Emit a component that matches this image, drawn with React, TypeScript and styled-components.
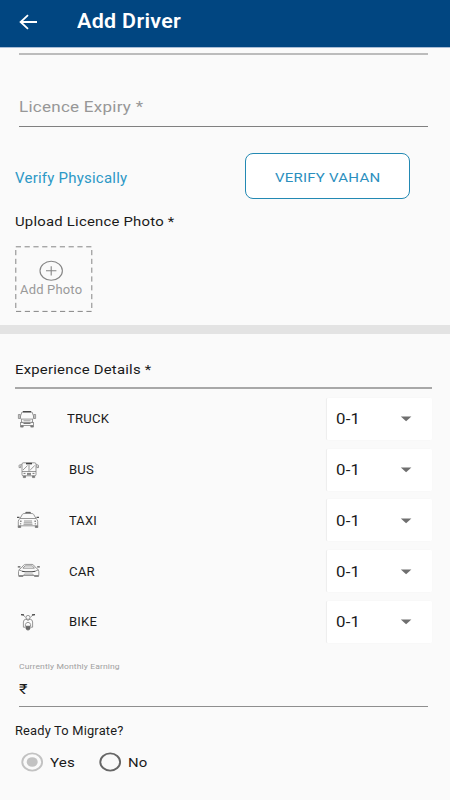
import React from "react";
import styled, { createGlobalStyle } from "styled-components";

const GlobalStyle = createGlobalStyle`
  * { box-sizing: border-box; }
  body { margin: 0; background: #fafafa; font-family: Roboto, "Noto Sans", sans-serif; }
`;

const Screen = styled.div`
  width: 450px;
  height: 800px;
  overflow: hidden;
  background: #fafafa;
  display: flex;
  flex-direction: column;
`;

const Text = styled.span<{ $size: number; $stretch: number; $color?: string; $weight?: number }>`
  display: block;
  white-space: nowrap;
  font-size: ${(p) => p.$size}px;
  font-weight: ${(p) => p.$weight ?? 400};
  letter-spacing: 0.015em;
  color: ${(p) => p.$color ?? "#1a1a1a"};
  transform: scaleX(${(p) => p.$stretch});
  transform-origin: left center;
`;

const AppBar = styled.header`
  flex: none;
  height: 48px;
  padding: 0 0 4px 19px;
  display: flex;
  align-items: center;
  gap: 39px;
  background: #014681;
  border-bottom: 1px solid #a9bdd6;
`;

const Title = styled.h1`
  margin: 0;
  padding-top: 1px;
  line-height: 22px;
`;

const Content = styled.main`
  display: flex;
  flex-direction: column;
`;

const PreviousField = styled.div`
  height: 7px;
  margin: 0 22px 0 19px;
  border-bottom: 2px solid #bcbcbc;
`;

const ExpiryField = styled.div`
  height: 72px;
  margin: 0 22px 0 19px;
  padding-top: 43.3px;
  border-bottom: 1px solid #808080;
  line-height: 18px;
`;

const VerifyRow = styled.div`
  height: 46px;
  margin: 26px 40px 0 14.7px;
  display: flex;
  align-items: center;
  justify-content: space-between;
`;

const VerifyButton = styled.button`
  width: 165px;
  height: 46px;
  padding: 1px 0 0 28.7px;
  display: flex;
  align-items: center;
  background: #fff;
  border: 1px solid #2389b3;
  border-radius: 8px;
  font-family: inherit;
`;

const VerifyLink = styled.a`
  padding-top: 4px;
`;

const UploadSection = styled.section`
  height: 126px;
  padding: 13px 0 0 14.8px;
  line-height: 20px;
`;

const PhotoBox = styled.div`
  width: 78px;
  height: 66px;
  margin: 14px 0 0;
  position: relative;
  display: flex;
  flex-direction: column;
  padding: 14px 0 0 5.2px;
`;

const DashedFrame = styled.svg`
  position: absolute;
  left: 0;
  top: 0;
`;

const PlusIcon = styled.svg`
  display: block;
  margin-left: 19px;
`;

const PhotoLabel = styled.div`
  padding-top: 1px;
  line-height: 16px;
`;

const Divider = styled.div`
  height: 9px;
  background: #e3e3e3;
`;

const ExperienceTitle = styled.h2`
  height: 55px;
  margin: 0 18px 0 14.6px;
  padding-top: 26px;
  border-bottom: 2px solid #a8a8a8;
  line-height: 20px;
`;

const ExperienceList = styled.div`
  padding-top: 4.4px;
  height: 259px;
`;

const ExperienceRow = styled.div`
  height: 50.8px;
  padding: 0 18px 0 14px;
  display: grid;
  grid-template-columns: 53px 1fr 105px;
  align-items: center;
`;

const VehicleName = styled.div<{ $indent: number }>`
  padding: 1px 0 0 ${(p) => p.$indent}px;
  line-height: 16px;
`;

const Select = styled.div`
  height: 42px;
  padding: 1px 20px 0 9px;
  display: flex;
  align-items: center;
  justify-content: space-between;
  background: #fff;
  border-radius: 1px;
  box-shadow: -1px 0 1px rgba(0, 0, 0, 0.05), 0 0 1px rgba(0, 0, 0, 0.04);
`;

const EarningField = styled.div`
  height: 59px;
  margin: 0 22px 0 18.8px;
  padding-top: 12px;
  border-bottom: 1px solid #8e8e8e;
`;

const EarningLabel = styled.div`
  padding-top: 1px;
  line-height: 12px;
`;

const EarningValue = styled.div`
  padding-top: 5.5px;
  line-height: 20px;
`;

const Question = styled.div`
  padding: 14px 0 0 14.8px;
  line-height: 20px;
`;

const RadioGroup = styled.div`
  padding: 11px 0 0 21px;
  display: flex;
  gap: 24px;
`;

const RadioOption = styled.label`
  width: 54px;
  height: 20px;
  display: flex;
  align-items: center;
  gap: 5.8px;
`;

const Icon = styled.svg`
  flex: none;
  display: block;
`;

const vehicleSvg = {
  width: 28,
  height: 24,
  viewBox: "0 0 28 24",
  fill: "none",
  stroke: "#777",
  strokeWidth: 0.75,
} as const;

const Truck = () => (
  <Icon {...vehicleSvg}>
    <path d="M8 5h10l1.5 4v2.2q0 .9-.9.9H7.4q-.9 0-.9-.9V9z" />
    <path d="M9 4.7h8" stroke="#444" strokeWidth="1.3" />
    <path d="M6.5 7.5H4.4v4h1.5V8M19.5 7.5h2.1v4h-1.5V8" />
    <path d="M7.5 12.2v3.4h11v-3.4M6.5 15v3.5h13V15M9.5 13.8h7" />
    <path d="M9.5 16.4h7M7.2 15.3h1.4M17.4 15.3h1.4" stroke="#777" strokeWidth="1.1" />
    <path d="M6.6 18.5v1.6h2.6v-1.6M16.8 18.5v1.6h2.6v-1.6" fill="#777" />
  </Icon>
);

const Bus = () => (
  <Icon {...vehicleSvg}>
    <rect x="8" y="4.8" width="14" height="13" rx="1.3" />
    <path d="M12 5.6h6" stroke="#444" strokeWidth="1.5" />
    <path d="M8 6.8H6q-.9 0-.9.8v2h1.6V7.5M22 6.8h1.6q.9 0 .9.8v2h-1.6V7.5M8 13.5h14M15 6.8v6.7M9 12l4.5-4.4M16.2 12l4.5-4.4" />
    <path d="M9.5 15.4h2M13 15.4h4M18.5 15.4h2M13 16.7h4" strokeWidth="1" />
    <path d="M9.3 17.8v1.8h2.2v-1.8M18.5 17.8v1.8h2.2v-1.8" fill="#777" />
  </Icon>
);

const Taxi = () => (
  <Icon {...vehicleSvg}>
    <path d="M11.8 5.2V4.3h4.6v.9" fill="#555" stroke="#555" />
    <path d="M6 10.5l2.3-4q.4-.8 1.3-.9 4.4-.4 8.8 0 .9.1 1.3.9l2.3 4M6 10.5h16M6 10.5q-1.7 1-1.7 3v4.3h19.4v-4.3q0-2-1.7-3" />
    <path d="M3 9.4h2.5M22.5 9.4H25" stroke="#555" strokeWidth="1.3" />
    <path d="M10 13h8M9.8 14.8h8.4M9.5 16.3h9" />
    <path d="M6 13.2h1.6M20.4 13.2H22M6.2 15.8h1M20.8 15.8h1" stroke="#555" strokeWidth="1" />
    <path d="M4.2 17.8v1.7h2.5v-1.7M21.3 17.8v1.7h2.5v-1.7" fill="#777" />
  </Icon>
);

const Car = () => (
  <Icon {...vehicleSvg}>
    <path d="M7 9.2l2.7-3Q10.5 5.4 11.5 5.4h6.5q1 0 1.6.7l2.7 3.1M9 9.2l2-2.3h7.4l2 2.3zM7 9.2q-2.5 1-2.5 3.4v3.9h20.3v-3.9q0-2.4-2.5-3.4" />
    <path d="M3.8 7.8h2.6M23.2 7.8h2.6" stroke="#555" strokeWidth="1.2" />
    <path d="M8 12.2q6.7 1.2 13.4 0" stroke="#444" strokeWidth="1.1" />
    <path d="M5 10.9l3 1.2M24.3 10.9l-3 1.2M9.5 16.3l1-1.2h8.2l1 1.2" />
    <path d="M4.6 17.2h4.6M20.2 17.2h4.6" stroke="#666" strokeWidth="1.1" />
  </Icon>
);

const Bike = () => (
  <Icon {...vehicleSvg}>
    <path d="M7 4.7l3 .3M18 5l3-.3" stroke="#444" strokeWidth="1.3" />
    <path d="M9.2 5l2.4 2.3M18.8 5l-2.4 2.3" />
    <circle cx="14" cy="7.4" r="2" />
    <path d="M12 9q-2.6.6-2.6 3v5.2h2M16 9q2.6.6 2.6 3v5.2h-2M12 9.2l2 1.2 2-1.2M11.4 16.2V14.5q.4-2 2.6-2.2 2.2.2 2.6 2.2v1.7z" />
    <path d="M12 16.5h4v1.8q-.2 1.8-2 1.8t-2-1.8z" fill="#666" stroke="#666" />
  </Icon>
);

const vehicles = [
  { name: "TRUCK", icon: Truck, indent: 0.4, stretch: 1.1 },
  { name: "BUS", icon: Bus, indent: 2.2, stretch: 1.1 },
  { name: "TAXI", icon: Taxi, indent: 2.4, stretch: 1.08 },
  { name: "CAR", icon: Car, indent: 2.4, stretch: 1.11 },
  { name: "BIKE", icon: Bike, indent: 2, stretch: 1.1 },
];

const Radio = ({ checked }: { checked?: boolean }) => (
  <Icon width="23" height="20" viewBox="0 0 23 20" fill="none">
    <ellipse cx="11.2" cy="10" rx="9.9" ry="8.6" stroke={checked ? "#c2c2c2" : "#666"} strokeWidth="1.9" />
    {checked && <ellipse cx="11.2" cy="10" rx="5.5" ry="4.8" fill="#c2c2c2" />}
  </Icon>
);

export default function App() {
  return (
    <Screen>
      <GlobalStyle />
      <AppBar>
        <Icon width="19" height="16" viewBox="0 0 19 16" fill="none" stroke="#fff" strokeWidth="1.8">
          <path d="M18 8H1.8M9 1.2L1.6 8L9 14.8" />
        </Icon>
        <Title>
          <Text $size={19.5} $weight={600} $stretch={1.1} $color="#fff">Add Driver</Text>
        </Title>
      </AppBar>
      <Content>
        <PreviousField />
        <ExpiryField>
          <Text $size={15} $stretch={1.135} $color="#979797">Licence Expiry *</Text>
        </ExpiryField>
        <VerifyRow>
          <VerifyLink>
            <Text $size={13.9} $stretch={1.08} $color="#2c98c6">Verify Physically</Text>
          </VerifyLink>
          <VerifyButton>
            <Text $size={13.6} $stretch={1.105} $color="#2c8fbe">VERIFY VAHAN</Text>
          </VerifyButton>
        </VerifyRow>
        <UploadSection>
          <Text $size={13.2} $stretch={1.128}>Upload Licence Photo *</Text>
          <PhotoBox>
            <DashedFrame width="78" height="66" fill="none" stroke="#858585">
              <rect x="0.8" y="0.8" width="76" height="64.6" strokeDasharray="5.2 3.6" />
            </DashedFrame>
            <PlusIcon width="25" height="21" viewBox="0 0 25 21" fill="none" stroke="#858585">
              <ellipse cx="12.2" cy="10.8" rx="11.2" ry="9.5" strokeWidth="1.1" />
              <path d="M7 10.8h10.4M12.2 6.2v9.2" strokeWidth="1.1" />
            </PlusIcon>
            <PhotoLabel>
              <Text $size={12} $stretch={1.08} $color="#999">Add Photo</Text>
            </PhotoLabel>
          </PhotoBox>
        </UploadSection>
        <Divider />
        <ExperienceTitle>
          <Text $size={13} $stretch={1.145}>Experience Details *</Text>
        </ExperienceTitle>
        <ExperienceList>
          {vehicles.map(({ name, icon: VehicleIcon, indent, stretch }) => (
            <ExperienceRow key={name}>
              <VehicleIcon />
              <VehicleName $indent={indent}>
                <Text $size={11.9} $stretch={stretch}>{name}</Text>
              </VehicleName>
              <Select>
                <Text $size={15} $stretch={1.12}>0-1</Text>
                <Icon width="12" height="6" viewBox="0 0 12 6">
                  <path d="M0.8 0.5h10.6L6.1 5.2z" fill="#6f6f6f" />
                </Icon>
              </Select>
            </ExperienceRow>
          ))}
        </ExperienceList>
        <EarningField>
          <EarningLabel>
            <Text $size={8} $stretch={1.065} $color="#a0a0a0">Currently Monthly Earning</Text>
          </EarningLabel>
          <EarningValue>
            <Text $size={14} $stretch={1.17}>₹</Text>
          </EarningValue>
        </EarningField>
        <Question>
          <Text $size={12} $stretch={1.07}>Ready To Migrate?</Text>
        </Question>
        <RadioGroup>
          <RadioOption>
            <Radio checked />
            <Text $size={13.2} $stretch={1.15}>Yes</Text>
          </RadioOption>
          <RadioOption>
            <Radio />
            <Text $size={13.2} $stretch={1.13}>No</Text>
          </RadioOption>
        </RadioGroup>
      </Content>
    </Screen>
  );
}
